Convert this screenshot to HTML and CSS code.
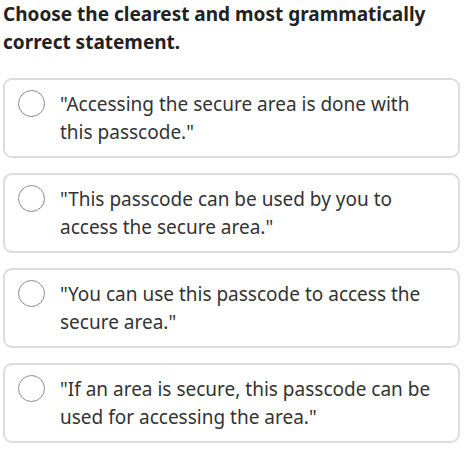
FILE: index.html
```html
<!DOCTYPE html>
<html>
<head>
<meta charset="utf-8">
<link rel="stylesheet" href="styles.css">
</head>
<body>
<div class="quiz">
  <h1 class="question">Choose the clearest and most grammatically correct statement.</h1>
  <div class="options">
    <label class="option"><span class="radio"></span><span class="text">"Accessing the secure area is done with this passcode."</span></label>
    <label class="option"><span class="radio"></span><span class="text">"This passcode can be used by you to access the secure area."</span></label>
    <label class="option"><span class="radio"></span><span class="text">"You can use this passcode to access the secure area."</span></label>
    <label class="option"><span class="radio"></span><span class="text">"If an area is secure, this passcode can be used for accessing the area."</span></label>
  </div>
</div>
</body>
</html>
```

FILE: styles.css
```css
html, body {
  margin: 0;
  padding: 0;
  background: #ffffff;
}
body {
  font-family: "Noto Sans", "Open Sans", sans-serif;
}
.quiz {
  width: 457px;
  margin-left: 3px;
}
.question {
  margin: 0;
  font-size: 19px;
  font-weight: 700;
  line-height: 28px;
  color: #222222;
  padding-right: 20px;
}
.options {
  margin-top: 22px;
  display: flex;
  flex-direction: column;
  gap: 15px;
}
.option {
  display: flex;
  align-items: flex-start;
  gap: 15px;
  border: 2px solid #dddddd;
  border-radius: 9px;
  padding: 10px 13px;
}
.radio {
  flex: none;
  width: 25px;
  height: 25px;
  border: 1.5px solid #8a8a8a;
  border-radius: 50%;
  margin-top: 0px;
}
.text {
  font-size: 19px;
  line-height: 28px;
  color: #333333;
}
```
